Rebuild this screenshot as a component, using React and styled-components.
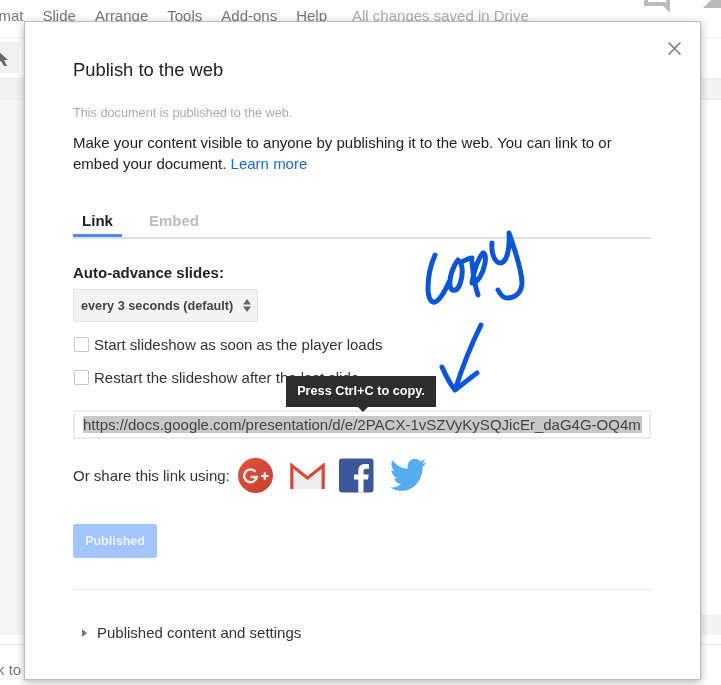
import React from "react";
import styled, { createGlobalStyle } from "styled-components";

const Global = createGlobalStyle`
  html, body { margin: 0; padding: 0; background: #fff; }
  body { font-family: "Liberation Sans", Arial, sans-serif; color: #222; }
`;

const Page = styled.div`
  position: relative;
  width: 721px;
  height: 685px;
  overflow: hidden;
  background: #fff;
  filter: blur(0.45px);
`;

const Backdrop = styled.div`
  height: 100%;
  display: flex;
  flex-direction: column;
`;

const MenuBar = styled.div`
  height: 38px;
  margin-bottom: 4px;
  display: flex;
  gap: 19px;
  margin-left: -24px;
  padding-top: 7px;
  box-sizing: border-box;
  font-size: 15px;
  line-height: 17px;
  color: #777;
  border-bottom: 1px solid #f5f5f5;
`;

const SavedNote = styled.span`
  margin-left: 6px;
  color: #aaa;
`;

const ToolBar = styled.div`
  height: 31px;
  display: flex;
  align-items: center;
`;

const ToolGroup = styled.div`
  width: 19px;
  height: 31px;
  background: #f1f1f1;
  display: flex;
  align-items: center;
  overflow: hidden;
`;

const Ruler = styled.div`
  height: 22px;
  margin-top: 5px;
  background: #f3f3f3;
  border-top: 1px solid #ececec;
  border-bottom: 1px solid #ececec;
  box-sizing: border-box;
`;

const Canvas = styled.div`
  flex: 1;
  display: flex;
`;

const SidePane = styled.div`
  flex: 0 0 360px;
  background: #f6f6f6;
`;

const WorkPane = styled.div`
  flex: 1;
  display: flex;
  flex-direction: column;
  justify-content: flex-end;
`;

const StatusBand = styled.div`
  height: 20px;
  background: #f3f3f3;
`;

const FootGap = styled.div`
  height: 9px;
  border-bottom: 1px solid #e8e8e8;
`;

const FootBar = styled.div`
  height: 40px;
  background: #fff;
  padding-top: 16px;
  box-sizing: border-box;
  font-size: 15px;
  line-height: 17px;
  color: #777;
  margin-left: -28px;
`;

const Dialog = styled.section`
  position: absolute;
  left: 24px;
  top: 21px;
  width: 677px;
  height: 659px;
  box-sizing: border-box;
  padding: 37px 49px 0 48px;
  background: #fff;
  border: 1px solid #bdbdbd;
  box-shadow: 0 2px 8px rgba(0, 0, 0, 0.3);
`;

const Close = styled.button`
  position: absolute;
  right: 19px;
  top: 20px;
  width: 13px;
  height: 13px;
  padding: 0;
  border: 0;
  background: none;
  color: #777;
  display: block;
`;

const Title = styled.h1`
  margin: 0;
  font-size: 18.4px;
  line-height: 22px;
  font-weight: 400;
  color: #222;
`;

const Status = styled.p`
  margin: 25px 0 0;
  font-size: 12.7px;
  line-height: 14px;
  color: #aaa;
`;

const Lead = styled.p`
  margin: 12px 0 0;
  font-size: 15px;
  line-height: 21px;
  color: #222;
`;

const LearnMore = styled.a`
  color: #1a66d6;
  text-decoration: none;
`;

const Tabs = styled.div`
  margin-top: 30px;
  height: 33px;
  display: flex;
  gap: 27px;
  border-bottom: 2px solid #e0e0e0;
`;

const Tab = styled.div`
  height: 33px;
  box-sizing: border-box;
  padding-top: 4px;
  width: ${(p) => (p.$active ? "49px" : "auto")};
  text-align: ${(p) => (p.$active ? "center" : "left")};
  font-size: 15px;
  line-height: 26px;
  font-weight: 700;
  color: ${(p) => (p.$active ? "#222" : "#bbb")};
  border-bottom: ${(p) => (p.$active ? "3px solid #4d8df0" : "0")};
`;

const Label = styled.div`
  margin-top: 25px;
  font-size: 15px;
  line-height: 18px;
  font-weight: 700;
  color: #222;
`;

const Select = styled.div`
  margin-top: 7px;
  width: 185px;
  height: 33px;
  box-sizing: border-box;
  padding: 0 6px 0 7px;
  display: flex;
  align-items: center;
  justify-content: space-between;
  background: #f3f3f3;
  border: 1px solid #e5e5e5;
  border-radius: 2px;
  font-size: 12.7px;
  font-weight: 700;
  color: #444;
`;

const Option = styled.label`
  display: flex;
  align-items: center;
  gap: 5px;
  height: 20px;
  margin-top: ${(p) => p.$gap}px;
  font-size: 15px;
  color: #333;
`;

const Box = styled.span`
  width: 15px;
  height: 15px;
  margin-left: 1px;
  box-sizing: border-box;
  border: 1px solid #c8c8c8;
  border-radius: 1px;
  background: #fff;
`;

const LinkField = styled.div`
  margin-top: 23px;
  height: 29px;
  box-sizing: border-box;
  padding: 4px 7px 0 8px;
  border: 2px solid #ececec;
  overflow: hidden;
  white-space: nowrap;
  font-size: 15px;
  line-height: 17px;
  color: #444;
`;

const Selected = styled.span`
  background: #c8c8c8;
  display: block;
  overflow: hidden;
`;

const Tip = styled.div`
  position: absolute;
  left: 286px;
  top: 376px;
  width: 150px;
  height: 31px;
  background: #2d2d2d;
  color: #fff;
  font-size: 12.7px;
  font-weight: 700;
  line-height: 31px;
  text-align: center;
  &::after {
    content: "";
    position: absolute;
    left: 72px;
    top: 100%;
    border: 5px solid transparent;
    border-top-color: #2d2d2d;
    border-bottom: 0;
  }
`;

const ShareRow = styled.div`
  margin-top: 18px;
  display: flex;
  align-items: center;
  height: 36px;
  font-size: 15px;
  color: #333;
`;

const ShareText = styled.span`
  margin-right: 8px;
`;

const ShareIcon = styled.svg`
  display: block;
  width: ${(p) => p.$w || 35}px;
  height: ${(p) => p.$h || 35}px;
  margin-right: ${(p) => p.$gap || 0}px;
`;

const Publish = styled.button`
  display: block;
  margin-top: 31px;
  width: 84px;
  height: 34px;
  border: 0;
  border-radius: 2px;
  background: #a3c5fd;
  color: #eef4ff;
  font-family: inherit;
  font-size: 12.5px;
  font-weight: 700;
  padding: 0;
`;

const Rule = styled.hr`
  margin: 31px 0 0;
  border: 0;
  border-top: 1px solid #e6e6e6;
`;

const Disclosure = styled.div`
  margin-top: 33px;
  display: flex;
  align-items: center;
  gap: 10px;
  padding-left: 9px;
  font-size: 15px;
  line-height: 20px;
  color: #333;
`;

const Caret = styled.span`
  width: 0;
  height: 0;
  border-left: 5px solid #777;
  border-top: 4px solid transparent;
  border-bottom: 4px solid transparent;
`;

const Ink = styled.svg`
  position: absolute;
  left: 0;
  top: 0;
  width: 721px;
  height: 685px;
  pointer-events: none;
  fill: none;
  stroke: #0b55d9;
  stroke-width: 5;
  stroke-linecap: round;
  stroke-linejoin: round;
`;

const Chat = styled.svg`
  position: absolute;
  left: 640px;
  top: 0;
  width: 81px;
  height: 21px;
`;

export default function App() {
  return (
    <>
      <Global />
      <Page>
        <Backdrop>
          <MenuBar>
            <span>Format</span>
            <span>Slide</span>
            <span>Arrange</span>
            <span>Tools</span>
            <span>Add-ons</span>
            <span>Help</span>
            <SavedNote>All changes saved in Drive</SavedNote>
          </MenuBar>
          <ToolBar>
            <ToolGroup>
              <svg width="14" height="20" viewBox="0 0 14 20">
                <path d="M-2 3 L8 12 L4 12 L7 18 L4 18 L1 13 L-2 15 Z" fill="#666" />
              </svg>
            </ToolGroup>
          </ToolBar>
          <Ruler />
          <Canvas>
            <SidePane />
            <WorkPane>
              <StatusBand />
            </WorkPane>
          </Canvas>
          <FootGap />
          <FootBar>Click to add notes</FootBar>
        </Backdrop>

        <Chat viewBox="0 0 81 21">
          <path d="M6 0 V4 H24 L28 8 V0" fill="none" stroke="#bbb" strokeWidth="4" />
          <path d="M63 8 L71 0 H81 V8 Z" fill="#bbb" />
        </Chat>

        <Dialog>
          <Close aria-label="Close">
            <svg width="13" height="13" viewBox="0 0 13 13">
              <path d="M0.5 0.5 L12.500 12.500 M12.500 0.5 L0.5 12.500" stroke="currentColor" strokeWidth="1.5" />
            </svg>
          </Close>
          <Title>Publish to the web</Title>
          <Status>This document is published to the web.</Status>
          <Lead>
            Make your content visible to anyone by publishing it to the web. You can link to or embed your document.{" "}
            <LearnMore>Learn more</LearnMore>
          </Lead>
          <Tabs>
            <Tab $active>Link</Tab>
            <Tab>Embed</Tab>
          </Tabs>
          <Label>Auto-advance slides:</Label>
          <Select>
            <span>every 3 seconds (default)</span>
            <svg width="8" height="13" viewBox="0 0 8 13">
              <path d="M4 0 L8 5.500 H0 Z M4 13 L8 7.500 H0 Z" fill="#666" />
            </svg>
          </Select>
          <Option $gap={12}>
            <Box />
            Start slideshow as soon as the player loads
          </Option>
          <Option $gap={13}>
            <Box />
            Restart the slideshow after the last slide
          </Option>
          <LinkField>
            <Selected>https://docs.google.com/presentation/d/e/2PACX-1vSZVyKySQJicEr_daG4G-OQ4mPzv</Selected>
          </LinkField>
          <ShareRow>
            <ShareText>Or share this link using:</ShareText>
            <ShareIcon viewBox="0 0 35 35" $gap={17}>
              <defs>
                <linearGradient id="gplus" x1="0" y1="0" x2="1" y2="1">
                  <stop offset="0" stopColor="#e0503f" />
                  <stop offset="1" stopColor="#c8412f" />
                </linearGradient>
              </defs>
              <circle cx="17.5" cy="17.5" r="17.5" fill="url(#gplus)" />
              <path d="M17.500 13.800 A6.400 6.400 0 1 0 18.800 19 H12.500" fill="none" stroke="#f4efee" strokeWidth="2.4" />
              <path d="M23 18 H30.500 M26.750 14.300 V21.700" stroke="#f4efee" strokeWidth="2.200" />
            </ShareIcon>
            <ShareIcon viewBox="0 0 35 35" $gap={14}>
              <path d="M1 6 L17.500 20 L34 6 V31 H1 Z" fill="#ededed" />
              <path d="M1.800 31 V7.500 L17.500 20 L33.200 7.500 V31" fill="none" stroke="#d9473a" strokeWidth="3.200" />
            </ShareIcon>
            <ShareIcon viewBox="0 0 35 35" $gap={16}>
              <rect x="0" y="0.5" width="34.500" height="34" rx="3" fill="#3b5998" />
              <path d="M24.500 34.500 V21.500 H29 L29.700 16.500 H24.500 V13.500 C24.500 11.900 25.200 10.800 27.200 10.800 H30 V6.300 C29 6.100 27.600 6 26 6 C22 6 19.300 8.500 19.300 12.900 V16.500 H15 V21.500 H19.300 V34.500 Z" fill="#fff" />
            </ShareIcon>
            <ShareIcon viewBox="0.7 2.800 22.300 18.100" preserveAspectRatio="none" $w={36} $h={32}>
              <path d="M23 4.800c-.8.400-1.700.600-2.600.700.900-.600 1.600-1.400 2-2.500-.900.500-1.900.900-2.900 1.100A4.600 4.600 0 0 0 11.700 8.300C7.900 8.100 4.500 6.300 2.200 3.500c-1.200 2.100-.600 4.800 1.400 6.100-.700 0-1.400-.200-2-.600 0 2.200 1.600 4.100 3.700 4.600-.700.200-1.400.200-2.100.100.600 1.800 2.300 3.200 4.300 3.200A9.300 9.300 0 0 1 .700 18.800 13 13 0 0 0 7.800 20.900c8.500 0 13.400-7.200 13.100-13.700.900-.600 1.700-1.400 2.100-2.400z" fill="#55acee" />
            </ShareIcon>
          </ShareRow>
          <Publish>Published</Publish>
          <Rule />
          <Disclosure>
            <Caret />
            Published content and settings
          </Disclosure>
        </Dialog>

        <Ink viewBox="0 0 721 685">
          <path d="M435 255 C431 264 428 278 428 288 C428 298 431 303 435 302 C440 300 445 291 449 282" />
          <path d="M458 260 C453 266 449 278 450 286 C451 292 457 292 460 284 C463 276 463 266 460 262 C463 262 468 258 472 258" />
          <path d="M483 253 C478 258 473 274 472 283 C477 284 483 274 485 263 C486 257 485 253 483 253 M472 262 C473 274 475 286 478 295" />
          <path d="M492 243 C491 252 494 262 500 263 C506 263 510 252 509 233 C514 248 521 266 522 282 C522 292 516 298 507 298 C503 298 500 294 498 290" />
          <path d="M481 325 C471 345 462 368 455 390 M442 367 C446 376 450 384 455 390 C463 384 470 378 477 373" />
        </Ink>
        <Tip>Press Ctrl+C to copy.</Tip>
      </Page>
    </>
  );
}
